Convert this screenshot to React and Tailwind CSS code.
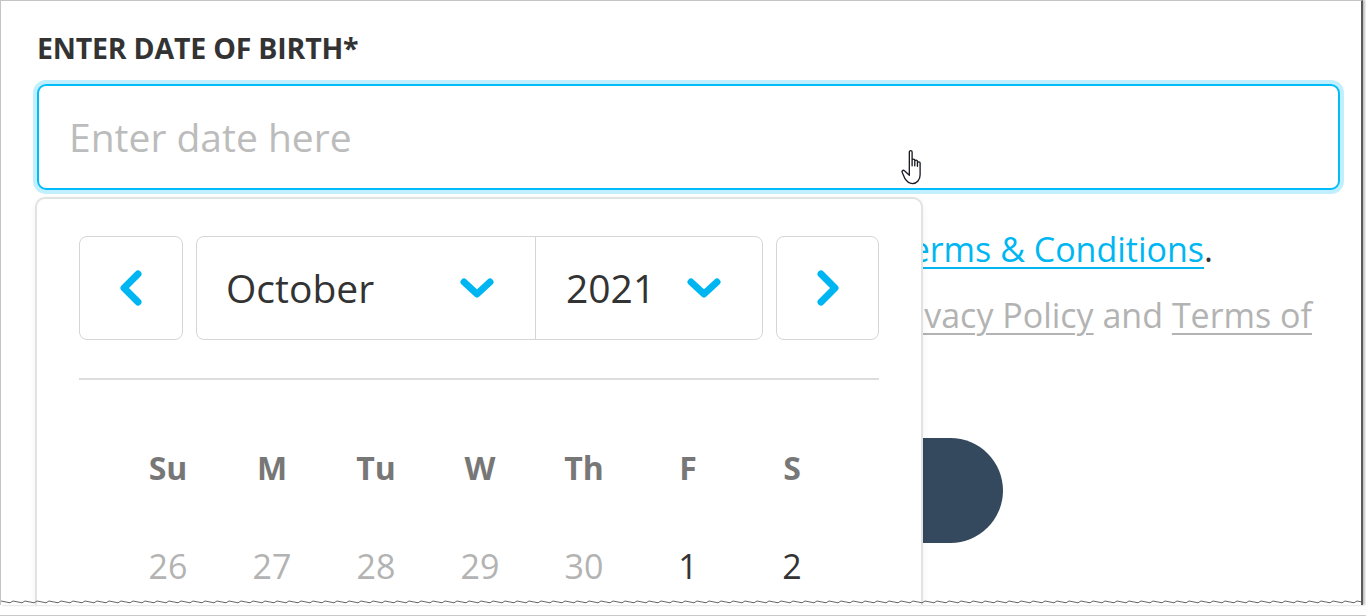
import { useState } from "react";

const days = ["Su", "M", "Tu", "W", "Th", "F", "S"];
const firstRow = [
    { d: 26, muted: true },
    { d: 27, muted: true },
    { d: 28, muted: true },
    { d: 29, muted: true },
    { d: 30, muted: true },
    { d: 1 },
    { d: 2 },
];

const Chevron = ({ dir }) => {
    if (dir === "down") {
        return (
            <svg width="34" height="20" viewBox="0 0 34 20" className="shrink-0">
                <polyline points="4,4 17,16 30,4" fill="none" stroke="#00b6f2" strokeWidth="7" strokeLinecap="round" strokeLinejoin="round" />
            </svg>
        );
    }
    const pts = dir === "left" ? "19,4 5,18 19,32" : "5,4 19,18 5,32";
    return (
        <svg width="24" height="36" viewBox="0 0 24 36">
            <polyline points={pts} fill="none" stroke="#00b6f2" strokeWidth="7" strokeLinecap="round" strokeLinejoin="round" />
        </svg>
    );
};

const HandCursor = () => (
    <svg width="32" height="40" viewBox="0 0 28 36" className="absolute left-[899px] top-[147px]">
        <path
            d="M8 3.5c0-1.5 2.5-1.5 2.5 0V16v-5c0-1.4 2.4-1.4 2.4 0v5-4c0-1.4 2.4-1.4 2.4 0v4.5-3c0-1.4 2.4-1.4 2.4 0V24c0 4.5-2.8 8-7 8-3.2 0-4.8-1.6-6.6-4.4L1.6 22c-.8-1.3.9-2.6 2-1.5L8 24.5Z"
            fill="#fff"
            stroke="#1b1b25"
            strokeWidth="1.2"
            strokeLinejoin="round"
        />
    </svg>
);

function TornEdge() {
    const pts = [];
    for (let x = 0; x <= 1366; x += 3) {
        const y = 2 + ((x * 7) % 4) * 0.6;
        pts.push(`${x},${y}`);
    }
    return (
        <svg width="1366" height="6" className="block">
            <polyline points={pts.join(" ")} fill="none" stroke="#666" strokeWidth="1" />
        </svg>
    );
}

export default function App() {
    const [month] = useState("October");
    const [year] = useState("2021");

    return (
        <div className="w-[1366px] h-[616px] bg-white overflow-hidden border-b border-[#c8c8c8]" style={{ fontFamily: '"Open Sans", "Noto Sans", sans-serif' }}>
            <div className="relative w-[1363px] h-[605px] border-l border-t border-[#c4c4c4] border-r-2 border-r-[#5a5a5a] shadow-[2px_0_2px_rgba(0,0,0,0.25)] overflow-hidden bg-white">
                <div className="pl-[36px] pt-[30px]">
                    <div className="text-[28.5px] leading-[34px] font-bold text-[#333] tracking-[-0.2px]">ENTER DATE OF BIRTH*</div>

                    <div className="relative mt-[19px] w-[1303px]">
                        <div className="h-[106px] rounded-[9px] border-2 border-[#00bcf8] shadow-[0_0_0_4px_#c2effd] flex items-center pl-[30px]">
                            <span className="text-[39px] text-[#bcbcbc]">Enter date here</span>
                        </div>

                        {/* text that sits partly under the calendar */}
                        <div className="mt-[26px] w-[1176px] text-right whitespace-nowrap text-[34px] leading-[66px] text-[#333]">
                            <span className="text-[#00b6f2] underline decoration-2 underline-offset-[5px]">Terms &amp; Conditions</span>.
                        </div>
                        <div className="w-[1275px] text-right whitespace-nowrap text-[34px] leading-[66px] text-[#b3b3b3]">
                            <span className="underline decoration-2 underline-offset-[5px]">Privacy Policy</span> and{" "}
                            <span className="underline decoration-2 underline-offset-[5px]">Terms of</span>
                        </div>
                        <div className="h-[66px]" />

                        <div className="mt-[24px] w-[966px] h-[105px] rounded-full bg-[#34495e]" />

                        {/* calendar dropdown */}
                        <div className="absolute left-[-2px] top-[113px] w-[888px] h-[420px] bg-white border-2 border-[#e2e2e2] rounded-[10px] shadow-[0_2px_6px_rgba(0,0,0,0.06)] pt-[37px] px-[42px]">
                            <div className="flex h-[104px] gap-[13px]">
                                <button className="w-[104px] h-full rounded-[8px] border border-[#d6d6d6] flex items-center justify-center">
                                    <Chevron dir="left" />
                                </button>
                                <div className="flex-1 h-full rounded-[8px] border border-[#d6d6d6] flex">
                                    <div className="w-[339px] flex items-center justify-between pl-[29px] pr-[41px] border-r border-[#d6d6d6]">
                                        <span className="text-[39px] text-[#333]">{month}</span>
                                        <Chevron dir="down" />
                                    </div>
                                    <div className="flex-1 flex items-center justify-between pl-[30px] pr-[41px]">
                                        <span className="text-[39px] text-[#333]">{year}</span>
                                        <Chevron dir="down" />
                                    </div>
                                </div>
                                <button className="w-[103px] h-full rounded-[8px] border border-[#d6d6d6] flex items-center justify-center">
                                    <Chevron dir="right" />
                                </button>
                            </div>

                            <div className="mt-[38px] h-[2px] bg-[#dddddd]" />

                            <div className="mt-[39px] ml-[37px] mr-[35px] grid grid-cols-7">
                                {days.map((d) => (
                                    <div key={d} className="h-[98px] flex items-center justify-center text-[32px] font-bold text-[#777]">
                                        {d}
                                    </div>
                                ))}
                                {firstRow.map((c) => (
                                    <div key={c.d} className={`h-[98px] flex items-center justify-center text-[34px] ${c.muted ? "text-[#b3b3b3]" : "text-[#333]"}`}>
                                        {c.d}
                                    </div>
                                ))}
                            </div>
                        </div>
                    </div>
                </div>

                <HandCursor />
                <div className="absolute left-0 bottom-0">
                    <TornEdge />
                </div>
            </div>
        </div>
    );
}
